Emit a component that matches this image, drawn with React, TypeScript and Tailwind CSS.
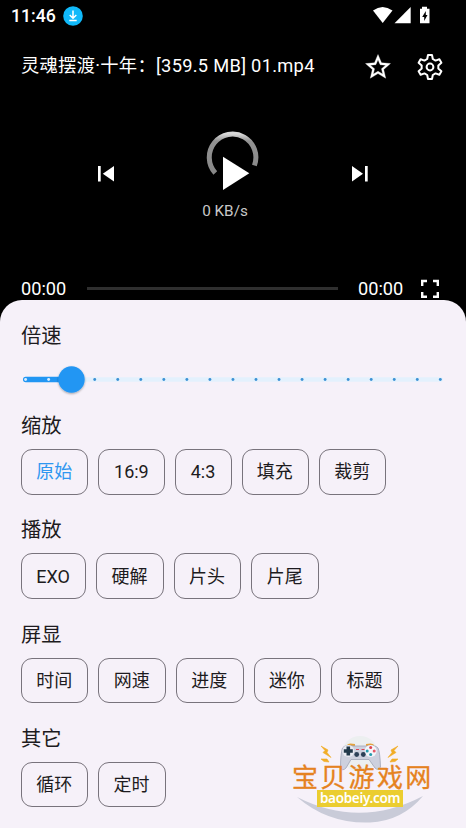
import React from "react";

const CJK = "font-['Roboto','Noto_Sans_CJK_SC',sans-serif]";

function Chip({ label, width, active }: { label: string; width: string; active?: boolean }) {
  return (
    <button
      className={`flex h-[45.500px] shrink-0 items-center justify-center rounded-[11px] border border-[#78737c] pr-px pt-px text-[18px] leading-none ${width} ${active ? "text-[#2f97f0]" : "text-[#1d1b20]"}`}
    >
      {label}
    </button>
  );
}

function Section({ title, children }: { title: string; children: React.ReactNode }) {
  return (
    <section className="h-[104.3px]">
      <h2 className="h-[38px] pt-px text-[20.3px] leading-[29px] text-[#1d1b20]">{title}</h2>
      <div className="flex gap-[10px]">{children}</div>
    </section>
  );
}

function SpeedSlider() {
  const ticks = Array.from({ length: 19 }, (_, i) => 4.6 + i * 23.04);
  return (
    <svg className="block h-[40px] w-[424px]" viewBox="0 0 424 40">
      <defs>
        <filter id="thumb" x="-30%" y="-30%" width="160%" height="170%">
          <feDropShadow dx="0" dy="1" stdDeviation="1" floodColor="#000" floodOpacity="0.35" />
        </filter>
      </defs>
      <rect x="2" y="17.2" width="420" height="4.6" rx="2.3" fill="#e3f1fd" />
      <rect x="2" y="16.8" width="50" height="5.4" rx="2.7" fill="#2196f3" />
      {ticks.map((x, i) => (
        <circle key={i} cx={x} cy="19.5" r="1.45" fill={i < 3 ? "#d7edff" : "#3c91d4"} />
      ))}
      <circle cx="50.5" cy="19.5" r="13.2" fill="#2196f3" filter="url(#thumb)" />
    </svg>
  );
}

function Watermark() {
  return (
    <div className="absolute left-[290px] top-[732px] flex h-[96px] w-[144px] flex-col items-start pt-[32px]">
      <svg className="absolute inset-0" width="144" height="96" viewBox="0 -6 144 96">
        <circle cx="70" cy="16" r="18" fill="#eceff0" />
        <path d="M7 59Q70 91 133 58Q112 83 80 84.500Q38 86 7 59Z" fill="#c9cbd8" />
        <g transform="translate(0 1)">
          <path d="M57 6q1-2.500 8-1v2h-8zM76 5q7-1.500 8 1v2h-8z" fill="#e5a23c" />
          <path d="M52.500 9Q55 5.500 63 7H77Q85 5.500 88 9Q90 13 90.500 28Q88 32 85 29L79 20.500H61L56 29Q52 33 50.500 28Q50.500 15 52.500 9Z" fill="#cdd0de" stroke="#a0a4b6" strokeWidth=".8" />
          <circle cx="58.300" cy="12" r="6" fill="#e8eaf2" />
          <circle cx="80.700" cy="12" r="6" fill="#f4f5fa" />
          <path d="M53.800 12h9M58.300 7.500v9" stroke="#20384a" strokeWidth="3.600" />
          <path d="M66 10.500h3M71.500 10.500h3" stroke="#de4252" strokeWidth="1" />
          <circle cx="66.700" cy="15.500" r="2.400" fill="#2c4057" />
          <circle cx="73.300" cy="15.500" r="2.400" fill="#2c4057" />
          <circle cx="80.700" cy="8.600" r="1.500" fill="#de4252" />
          <circle cx="84.200" cy="12" r="1.500" fill="#e65766" />
          <circle cx="80.700" cy="15.400" r="1.500" fill="#269bad" />
          <circle cx="77.200" cy="12" r="1.500" fill="#269bad" />
        </g>
        <path d="M31 8l7 4-1 2.500 4 5-8-5 2-2zM31 21l6 0 2 3-5-.5zM108 8l-7 4 1 2.500-4 5 8-5-2-2zM108 21l-6 0-2 3 5-.5z" fill="#f1ad27" stroke="#f1ad27" strokeWidth=".6" />
      </svg>
      <div className="relative -mt-px h-[26px] whitespace-nowrap pl-[2px] font-['Noto_Sans_CJK_SC',sans-serif] text-[26px] leading-[26px] tracking-[2.300px] text-[#e58220] [-webkit-text-stroke:0.3px_#e58220]">宝贝游戏网</div>
      <div className="relative ml-[27px] mt-px flex h-[17px] w-[86px] items-center justify-center bg-[#ebcd30] pb-px font-['Noto_Sans',sans-serif] text-[13.500px] font-semibold leading-[15px] tracking-[-0.300px] text-white">baobeiy.com</div>
    </div>
  );
}

export default function App() {
  return (
    <main className={`relative h-[828px] w-[466px] overflow-hidden bg-black text-white ${CJK}`}>
      <header className="flex h-[32px] items-center pl-[11px]">
        <span className="w-[52px] pt-px text-[17.700px] font-medium leading-none">11:46</span>
        <svg className="shrink-0" width="20" height="20" viewBox="0 0 20 20">
          <circle cx="10" cy="10" r="9.8" fill="#10b9fa" />
          <path d="M10 4.500V12M6.700 9l3.300 3.200L13.300 9M6.300 14.500h7.400" fill="none" stroke="white" strokeWidth="1.5" />
        </svg>
        <svg className="ml-[289px]" width="62" height="20" viewBox="0 0 62 20" fill="white">
          <path d="M1 4.500Q10.500-2.500 20.500 4.500L10.700 17Z" />
          <path d="M22.500 17.300L38.700 1V17.300Z" />
          <path fillRule="evenodd" d="M50 .7h5v2h2.500v14.600H48V2.700h2zM53.800 5L50.200 11h2v4l3.300-6h-1.700z" />
        </svg>
      </header>
      <div className="flex h-[68px] items-center pl-[21px]">
        <h1 className="w-[342px] whitespace-nowrap text-[18.300px] leading-none tracking-[0.280px]">灵魂摆渡·十年：[359.5 MB] 01.mp4</h1>
        <svg className="mt-[2px]" width="30" height="30" viewBox="0 0 24 24" fill="white" stroke="white" strokeWidth=".25">
          <path d="m22 9.24-7.19-.62L12 2 9.19 8.63 2 9.24l5.46 4.73L5.82 21 12 17.27 18.18 21l-1.63-7.03zM12 15.4l-3.76 2.27 1-4.28-3.32-2.88 4.38-.38L12 6.1l1.71 4.04 4.38.38-3.32 2.88 1 4.28z" />
        </svg>
        <svg className="ml-[22.500px] mt-[2px]" width="28" height="28" viewBox="-14 -14 28 28" fill="none" stroke="white" strokeWidth="2" strokeLinejoin="round">
          <path d="M-2.800-8L-2-12H2L2.800-8 5.530-6.420 9.390-7.730 11.390-4.270 8.330-1.580V1.580L11.390 4.270 9.390 7.730 5.530 6.420 2.800 8 2 12H-2L-2.800 8-5.530 6.420-9.390 7.730-11.390 4.270-8.330 1.580V-1.580L-11.390-4.270-9.390-7.730-5.530-6.420Z" />
          <circle r="3.4" />
        </svg>
      </div>
      <div className="flex h-[120px] items-start justify-between pl-[97px] pr-[97px] pt-[30px]">
        <svg className="mt-[35px]" width="18" height="18" viewBox="0 0 18 18" fill="white"><path d="M1 1h2.700v15.500H1zM17 1v15.500L5.800 8.800z" /></svg>
        <div className="flex w-[58px] -translate-x-[0.500px] flex-col items-center">
          <svg className="-translate-x-px" width="58" height="64" viewBox="0 0 58 64">
            <defs><linearGradient id="arc" x1="0" y1="0" x2="0" y2="1"><stop stopColor="#d8d8d8" /><stop offset=".18" stopColor="#929292" /><stop offset="1" stopColor="#888" /></linearGradient></defs>
            <path d="M12.800 43A23.300 23.300 0 1 1 51.900 35.500" fill="none" stroke="url(#arc)" strokeWidth="5" />
            <path d="M20.500 26.800L46.800 43.200 20.500 60Z" fill="white" />
          </svg>
          <span className="mt-[10px] -translate-x-[7.500px] whitespace-nowrap text-[15.300px] leading-none text-[#c8c8c8]">0 KB/s</span>
        </div>
        <svg className="mt-[35px]" width="18" height="18" viewBox="0 0 18 18" fill="white"><path d="M1 1v15.500l11-7.700zM14 1h2.700v15.500H14z" /></svg>
      </div>
      <div className="flex h-[80px] items-center px-[21px] pt-[57px] text-[18.200px] leading-none">
        <span className="w-[66px] pt-[2px]">00:00</span>
        <div className="h-[3px] w-[251px] bg-[#2f2f2f]" />
        <span className="ml-[20px] w-[62px] pt-[2px]">00:00</span>
        <svg className="shrink-0" width="20" height="20" viewBox="0 0 20 20" fill="none" stroke="white" strokeWidth="2.4"><path d="M2.200 7V2H7M13 2h4.800V7M17.800 13v4.800H13M7 17.800H2.200V13" /></svg>
      </div>
      <section className="h-[528px] rounded-t-[22px] bg-[#f6f1f9] px-[21px] pt-[20px]">
        <h2 className="h-[40px] pt-[2px] text-[20.300px] leading-[29px] text-[#1d1b20]">倍速</h2>
        <SpeedSlider />
        <div className="pt-[11px]">
          <Section title="缩放">
            <Chip label="原始" width="w-[67.4px]" active />
            <Chip label="16:9" width="w-[67px]" />
            <Chip label="4:3" width="w-[56.2px]" />
            <Chip label="填充" width="w-[67.4px]" />
            <Chip label="裁剪" width="w-[67.4px]" />
          </Section>
          <Section title="播放">
            <Chip label="EXO" width="w-[65.2px]" />
            <Chip label="硬解" width="w-[67.6px]" />
            <Chip label="片头" width="w-[67.6px]" />
            <Chip label="片尾" width="w-[67.6px]" />
          </Section>
          <Section title="屏显">
            <Chip label="时间" width="w-[67.4px]" />
            <Chip label="网速" width="w-[67.6px]" />
            <Chip label="进度" width="w-[67.6px]" />
            <Chip label="迷你" width="w-[67.6px]" />
            <Chip label="标题" width="w-[67.6px]" />
          </Section>
          <Section title="其它">
            <Chip label="循环" width="w-[67.4px]" />
            <Chip label="定时" width="w-[67.4px]" />
          </Section>
        </div>
      </section>
      <Watermark />
    </main>
  );
}
